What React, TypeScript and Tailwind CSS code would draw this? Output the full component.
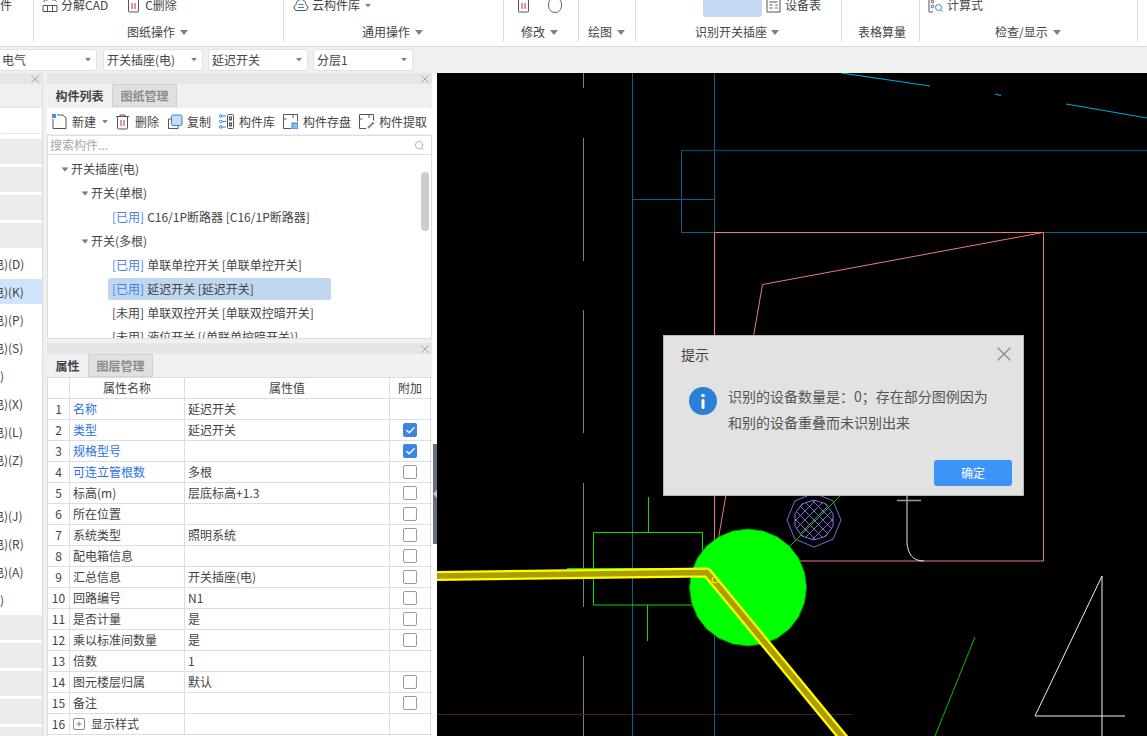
import { Check, Plus, Search, X } from 'lucide-react'

const rowsLeft = [
  '', '', '', '',
  '电)(D)', '电)(K)', '电)(P)', '电)(S)', ')', '电)(X)', '电)(L)', '电)(Z)', ' ', '电)(J)', '电)(R)', '电)(A)', ')',
  '', '', '', '', '',
]

const props = [
  { name: '名称', value: '延迟开关', blue: true, check: null },
  { name: '类型', value: '延迟开关', blue: true, check: true },
  { name: '规格型号', value: '', blue: true, check: true },
  { name: '可连立管根数', value: '多根', blue: true, check: false },
  { name: '标高(m)', value: '层底标高+1.3', check: false },
  { name: '所在位置', value: '', check: false },
  { name: '系统类型', value: '照明系统', check: false },
  { name: '配电箱信息', value: '', check: false },
  { name: '汇总信息', value: '开关插座(电)', check: false },
  { name: '回路编号', value: 'N1', check: false },
  { name: '是否计量', value: '是', check: false },
  { name: '乘以标准间数量', value: '是', check: false },
  { name: '倍数', value: '1', check: null },
  { name: '图元楼层归属', value: '默认', check: false },
  { name: '备注', value: '', check: false },
]

function Caret({ className = '' }: { className?: string }) {
  return (
    <svg width="8" height="5" viewBox="0 0 8 5" className={`shrink-0 ${className}`}>
      <polygon points="0,0 8,0 4,5" fill="#808080" />
    </svg>
  )
}

function TrashIcon() {
  return (
    <svg width="15" height="16" viewBox="0 0 15 16" fill="none" className="shrink-0">
      <path d="M1 2.500h13M5 2.500V1h5v1.500M2.500 2.500v11.500a1 1 0 0 0 1 1h8a1 1 0 0 0 1-1V2.500" stroke="#555" />
      <path d="M6 6v6M9 6v6" stroke="#d0262c" />
    </svg>
  )
}

function CadIcon() {
  return (
    <svg width="16" height="15" viewBox="0 0 16 15" fill="none" className="shrink-0">
      <path d="M1 7.500h14v6H1zM5.500 7.500v6M10.500 7.500v6" stroke="#555" />
      <path d="M1 4l2-2h3M15 4l-2-2h-3" stroke="#2f86e0" />
    </svg>
  )
}

function CloudIcon() {
  return (
    <svg width="16" height="14" viewBox="0 0 16 14" fill="none" className="shrink-0">
      <path d="M4 12.500h8a3 3 0 0 0 1-5.800C12.800 3.500 10.800 1.500 8 1.500S3.200 3.500 3 6.700a3 3 0 0 0 1 5.800z" stroke="#555" />
      <path d="M5.500 6.500h5M5 9.500h6" stroke="#2f86e0" />
    </svg>
  )
}

function SheetIcon() {
  return (
    <svg width="15" height="16" viewBox="0 0 15 16" fill="none" className="shrink-0">
      <path d="M1 1h13v14H1z" stroke="#555" />
      <path d="M3.500 5h8M3.500 8h3M3.500 11h3" stroke="#555" />
      <path d="M9 8h3M9 11h3" stroke="#2f86e0" />
    </svg>
  )
}

function FormulaIcon() {
  return (
    <svg width="16" height="16" viewBox="0 0 16 16" fill="none" className="shrink-0">
      <path d="M5 1H1v14h4" stroke="#555" />
      <path d="M7 1h4" stroke="#555" />
      <circle cx="4.500" cy="4.500" r="1.300" stroke="#555" />
      <circle cx="4.500" cy="9.500" r="1.300" stroke="#555" />
      <circle cx="10.500" cy="10.500" r="3" stroke="#2f86e0" />
      <path d="M12.500 12.500l2 2" stroke="#2f86e0" />
    </svg>
  )
}

function NewIcon() {
  return (
    <svg width="15" height="16" viewBox="0 0 15 16" fill="none" className="shrink-0">
      <path d="M1 5v9.500h13V4l-3-3H5" stroke="#555" />
      <rect x="0" y="0" width="4" height="4" fill="#3f8fe8" />
    </svg>
  )
}

function CopyIcon() {
  return (
    <svg width="16" height="16" viewBox="0 0 16 16" fill="none" className="shrink-0">
      <path d="M4 5H1.500v9.500H11V12" stroke="#555" />
      <rect x="4.500" y="1" width="10.500" height="10.500" rx="1.500" fill="#c7dcf5" stroke="#2f86e0" />
    </svg>
  )
}

function LibIcon() {
  return (
    <svg width="15" height="15" viewBox="0 0 15 15" fill="none" className="shrink-0">
      <circle cx="1.800" cy="2" r="1.300" stroke="#2f86e0" />
      <circle cx="1.800" cy="7.500" r="1.300" stroke="#2f86e0" />
      <circle cx="1.800" cy="13" r="1.300" stroke="#2f86e0" />
      <path d="M3 2h4M3 7.500h4M3 13h4" stroke="#2f86e0" />
      <rect x="8.500" y="0.500" width="6" height="14" rx="1" stroke="#555" />
      <rect x="10.500" y="3" width="2" height="3" stroke="#555" />
      <rect x="10.500" y="9" width="2" height="3" stroke="#555" />
    </svg>
  )
}

function SaveIcon() {
  return (
    <svg width="15" height="15" viewBox="0 0 15 15" fill="none" className="shrink-0">
      <path d="M8 14.500H.5V.5h14v7M.5 5h3M10 1v3" stroke="#555" />
      <rect x="9" y="9" width="6" height="6" fill="#8dbdf0" stroke="#2f86e0" />
    </svg>
  )
}

function PickIcon() {
  return (
    <svg width="15" height="15" viewBox="0 0 15 15" fill="none" className="shrink-0">
      <path d="M7 14.500H.5V.5h14v6M.5 5h3M10 1v3" stroke="#555" />
      <path d="M9 14l4-4" stroke="#8a8a8a" strokeWidth="2" />
      <path d="M13 8.500l1.500 1.500" stroke="#2f86e0" strokeWidth="2" />
    </svg>
  )
}

function PanelHead() {
  return (
    <div className="flex h-[11px] shrink-0 items-center justify-end bg-[#e6e6e6]">
      <X className="h-[14px] w-[14px] shrink-0 text-[#a0a0a0]" strokeWidth={1.500} />
    </div>
  )
}

function Tabs({ items }: { items: { label: string; w: string; active?: boolean }[] }) {
  return (
    <div className="flex h-[23px] shrink-0 bg-[#f0f0f0]">
      {items.map((t) =>
        t.active ? (
          <div key={t.label} className={`flex items-center justify-center font-bold text-[#444] ${t.w}`}>{t.label}</div>
        ) : (
          <div key={t.label} className={`flex items-center justify-center border border-[#d2d2d2] bg-[#e0e0e0] font-bold text-[#8c8c8c] ${t.w}`}>{t.label}</div>
        ),
      )}
    </div>
  )
}

function Ribbon() {
  return (
    <div className="flex h-[47px] shrink-0 overflow-hidden border-b border-[#dcdcdc] bg-white text-[12px] text-[#444]">
      <div className="h-[42px] w-[34px] shrink-0 border-r border-[#dedede]">
        <div className="-mt-[5px] flex h-5 items-center">件</div>
      </div>
      <div className="flex h-[42px] w-[250px] shrink-0 flex-col border-r border-[#dedede]">
        <div className="-mt-[5px] flex h-5 items-center pl-[8px]">
          <CadIcon />
          <span className="ml-[3px]">分解CAD</span>
          <span className="ml-[18px]"><TrashIcon /></span>
          <span className="ml-1">C删除</span>
        </div>
        <div className="mt-[7px] flex h-5 items-center pl-[93px]">图纸操作 <Caret className="ml-[5px]" /></div>
      </div>
      <div className="flex h-[42px] w-[220px] shrink-0 flex-col border-r border-[#dedede]">
        <div className="-mt-[5px] flex h-5 items-center pl-[9px]">
          <CloudIcon />
          <span className="ml-[3px]">云构件库</span>
          <Caret className="ml-[4px] scale-75" />
        </div>
        <div className="mt-[7px] flex h-5 items-center pl-[78px]">通用操作 <Caret className="ml-[5px]" /></div>
      </div>
      <div className="flex h-[42px] w-[75px] shrink-0 flex-col border-r border-[#dedede]">
        <div className="-mt-[5px] flex h-5 items-center pl-[12px]">
          <TrashIcon />
          <span className="ml-[17px] h-[16px] w-[14px] rounded-full border border-[#666]" />
        </div>
        <div className="mt-[7px] flex h-5 items-center pl-[17px]">修改 <Caret className="ml-[5px]" /></div>
      </div>
      <div className="flex h-[42px] w-[57px] shrink-0 flex-col border-r border-[#dedede]">
        <div className="-mt-[5px] h-5" />
        <div className="mt-[7px] flex h-5 items-center pl-[9px]">绘图 <Caret className="ml-[5px]" /></div>
      </div>
      <div className="flex h-[42px] w-[206px] shrink-0 flex-col border-r border-[#dedede]">
        <div className="-mt-[5px] flex h-5 pl-[67px]">
          <div className="h-[22px] w-[59px] shrink-0 rounded-[3px] bg-[#c2d9f1]" />
          <div className="ml-[4px] flex h-5 items-center">
            <SheetIcon />
            <span className="ml-1">设备表</span>
          </div>
        </div>
        <div className="mt-[7px] flex h-5 items-center pl-[59px]">识别开关插座 <Caret className="ml-[4px]" /></div>
      </div>
      <div className="flex h-[42px] w-[78px] shrink-0 flex-col border-r border-[#dedede]">
        <div className="-mt-[5px] h-5" />
        <div className="mt-[7px] flex h-5 items-center pl-[16px]">表格算量</div>
      </div>
      <div className="flex h-[42px] w-[218px] shrink-0 flex-col border-r border-[#dedede]">
        <div className="-mt-[5px] flex h-5 items-center pl-[8px]">
          <FormulaIcon />
          <span className="ml-[3px]">计算式</span>
        </div>
        <div className="mt-[7px] flex h-5 items-center pl-[75px]">检查/显示 <Caret className="ml-[5px]" /></div>
      </div>
    </div>
  )
}

function Select({ label, w, ml }: { label: string; w: string; ml: string }) {
  return (
    <div className={`flex h-[22px] items-center justify-between rounded-[3px] border border-[#e2e2e2] bg-white pr-[4px] pl-[3px] ${w} ${ml}`}>
      <span>{label}</span>
      <Caret className="scale-75" />
    </div>
  )
}

function LeftPanel() {
  return (
    <div className="flex h-full w-[43px] shrink-0 flex-col overflow-hidden border-r border-[#dddddd] bg-white text-[12px] text-[#444]">
      <PanelHead />
      <div className="h-[23px] shrink-0 bg-[#f0f0f0]" />
      <div className="h-[27px] shrink-0 rounded-[2px] border-y border-[#e4e4e4] bg-white" />
      <div className="h-[5px] shrink-0" />
      {rowsLeft.map((r, i) => (
        <div
          key={i}
          className={`mb-[3px] flex h-[25px] shrink-0 items-center whitespace-nowrap ${
            r === '' ? 'bg-[#ececec]' : i === 5 ? 'bg-[#cfe5fc]' : 'bg-white'
          }`}
        >
          <span className={r.length > 1 ? '-ml-[8px]' : ''}>{r}</span>
        </div>
      ))}
    </div>
  )
}

function TreeRow({ pad, caret, used, text }: { pad: string; caret?: boolean; used?: string; text: string }) {
  return (
    <div className={`flex h-6 items-center whitespace-nowrap ${pad}`}>
      {caret && <Caret className="mr-[2px] scale-90" />}
      {used === 'yes' && <span className="mr-[3px] text-[#4a7fe0]">[已用]</span>}
      {used === 'no' && <span className="mr-[3px]">[未用]</span>}
      {text}
    </div>
  )
}

function ListPanel() {
  const tools = [
    { icon: <LibIcon />, label: '构件库', ml: 'ml-2' },
    { icon: <SaveIcon />, label: '构件存盘', ml: 'ml-2' },
    { icon: <PickIcon />, label: '构件提取', ml: 'ml-2' },
  ]
  return (
    <div className="flex h-[266px] shrink-0 flex-col bg-[#f0f0f0]">
      <PanelHead />
      <Tabs items={[{ label: '构件列表', w: 'w-[65px]', active: true }, { label: '图纸管理', w: 'w-[65px]' }]} />
      <div className="mt-px flex h-[26px] shrink-0 items-center rounded-[3px] bg-white pt-px pl-[5px]">
        <NewIcon />
        <span className="ml-[5px]">新建</span>
        <Caret className="ml-[5px] scale-75" />
        <span className="ml-[6px]"><TrashIcon /></span>
        <span className="ml-[5px]">删除</span>
        <span className="ml-2"><CopyIcon /></span>
        <span className="ml-[4px]">复制</span>
        {tools.map((t) => (
          <div key={t.label} className={`flex items-center gap-[5px] whitespace-nowrap ${t.ml}`}>
            {t.icon}
            {t.label}
          </div>
        ))}
      </div>
      <div className="mt-px flex h-[20px] shrink-0 items-center justify-between border border-[#dedede] bg-white pr-[6px] pl-[2px] text-[#a8a8a8]">
        <span>搜索构件...</span>
        <Search className="h-[11px] w-[11px] text-[#b0b0b0]" />
      </div>
      <div className="flex min-h-0 flex-1 overflow-hidden border-x border-b border-[#dedede] bg-white pt-[2px]">
        <div className="min-w-0 flex-1">
          <TreeRow pad="pl-[13px]" caret text="开关插座(电)" />
          <TreeRow pad="pl-[33px]" caret text="开关(单根)" />
          <TreeRow pad="pl-[64px]" used="yes" text="C16/1P断路器 [C16/1P断路器]" />
          <TreeRow pad="pl-[33px]" caret text="开关(多根)" />
          <TreeRow pad="pl-[64px]" used="yes" text="单联单控开关 [单联单控开关]" />
          <div className="my-px ml-[60px] flex h-[22px] w-[223px] items-center rounded-[2px] bg-[#c0d7f0] pl-1 whitespace-nowrap">
            <span className="mr-[3px] text-[#4a7fe0]">[已用]</span>延迟开关 [延迟开关]
          </div>
          <TreeRow pad="pl-[64px]" used="no" text="单联双控开关 [单联双控暗开关]" />
          <TreeRow pad="pl-[64px]" used="no" text="液位开关 [(单联单控暗开关)]" />
        </div>
        <div className="mt-[15px] mr-[2px] h-[59px] w-2 shrink-0 rounded bg-[#cccccc]" />
      </div>
    </div>
  )
}

function PropRow({ no, children, value, check }: { no: number; children: React.ReactNode; value?: string; check: boolean | null }) {
  return (
    <div className="flex h-[21px] shrink-0 border-b border-[#dedede]">
      <div className="flex w-[22px] shrink-0 items-center justify-center border-r border-[#dedede]">{no}</div>
      <div className="flex w-[115px] shrink-0 items-center border-r border-[#dedede] pl-[3px] whitespace-nowrap">{children}</div>
      <div className="flex w-[205px] shrink-0 items-center border-r border-[#dedede] pl-[3px]">{value}</div>
      <div className="flex w-[41px] shrink-0 items-center justify-center border-r border-[#dedede]">
        {check === true && (
          <div className="flex h-[14px] w-[14px] items-center justify-center rounded-[2px] bg-[#3b86e0]">
            <Check className="h-[11px] w-[11px] text-white" strokeWidth={3} />
          </div>
        )}
        {check === false && <div className="h-[14px] w-[14px] rounded-[2px] border border-[#9a9a9a] bg-white" />}
      </div>
    </div>
  )
}

function PropsPanel() {
  return (
    <div className="mt-1 flex min-h-0 flex-1 flex-col overflow-hidden bg-[#f0f0f0]">
      <PanelHead />
      <Tabs items={[{ label: '属性', w: 'w-[41px]', active: true }, { label: '图层管理', w: 'w-[65px]' }]} />
      <div className="flex min-h-0 flex-1 flex-col overflow-hidden border-t border-l border-[#dedede] bg-white">
        <div className="flex h-[21px] shrink-0 border-b border-[#dedede]">
          <div className="w-[22px] shrink-0 border-r border-[#dedede]" />
          <div className="flex w-[115px] shrink-0 items-center justify-center border-r border-[#dedede]">属性名称</div>
          <div className="flex w-[205px] shrink-0 items-center justify-center border-r border-[#dedede]">属性值</div>
          <div className="flex w-[41px] shrink-0 items-center justify-center border-r border-[#dedede]">附加</div>
        </div>
        {props.map((p, i) => (
          <PropRow key={p.name} no={i + 1} value={p.value} check={p.check}>
            <span className={p.blue ? 'text-[#2a6fe8]' : ''}>{p.name}</span>
          </PropRow>
        ))}
        <PropRow no={16} check={null}>
          <span className="mr-[6px] flex h-3 w-3 items-center justify-center rounded-[2px] border border-[#888]">
            <Plus className="h-2 w-2 text-[#555]" />
          </span>
          显示样式
        </PropRow>
      </div>
    </div>
  )
}

function CadCanvas() {
  const poly = (cx: number, cy: number, r: number, n: number, rot = 0) =>
    Array.from({ length: n }, (_, i) => {
      const a = (i / n) * Math.PI * 2 + rot
      return `${(cx + r * Math.cos(a)).toFixed(1)},${(cy + r * Math.sin(a)).toFixed(1)}`
    }).join(' ')
  const hatch = Array.from({ length: 9 }, (_, i) => -36 + i * 9)
  return (
    <svg viewBox="437 73 710 663" className="block h-full w-full">
      <defs>
        <clipPath id="oct">
          <polygon points={poly(814, 520, 20, 10, Math.PI / 2)} />
        </clipPath>
      </defs>
      <rect x="437" y="73" width="710" height="663" fill="#000" />
      {/* 灰色点划线 */}
      <path d="M583.500 73v15M583.500 138v123M583.500 310v123M583.500 483v124M583.500 656v80" stroke="#808080" />
      <path d="M437 714.500h416" stroke="#4a1c28" />
      {/* 蓝色轴线 */}
      <path d="M632.500 73v663M714.500 73v663M632 199.500h82M681.500 150v83M681.500 232.500H1147" stroke="#0a5f88" />
      <path d="M681.500 150.500H1147" stroke="#064058" strokeWidth="1.500" />
      <path d="M841 73l89 13M995 94l6 1.500M1066 104l81 14" stroke="#00a5dc" strokeWidth="1.200" />
      {/* 红框 */}
      <path d="M714.500 561V232.500H1043.500V561H714.500M1043 232.500L762.500 284.500L714.500 561" stroke="#f07878" fill="none" />
      {/* 绿色 */}
      <path d="M593.500 532.500h109M593.500 532.500v72.500h109M648.500 497v35.500M647.500 605v36M567 568.500h92M702.500 532v20" stroke="#00e000" fill="none" />
      <polygon points={poly(748, 587.500, 58.500, 24)} fill="#00ff00" stroke="#009a00" />
      {/* 八边形 */}
      <polygon points={poly(814, 520, 27, 8, Math.PI / 2)} fill="none" stroke="#6f6fe0" />
      <polygon points={poly(814, 520, 20, 10, Math.PI / 2)} fill="none" stroke="#7a7aee" />
      <g clipPath="url(#oct)" stroke="#7a7aee" strokeWidth="0.900">
        {hatch.map((d) => (
          <g key={d}>
            <path d={`M${784 + d} 490l60 60`} />
            <path d={`M${844 + d} 490l-60 60`} />
          </g>
        ))}
      </g>
      <path d="M975 637L935 736M790 546l50-50" stroke="#00c000" />
      {/* 黄色管线 */}
      <polyline points="437,576 707,572.500 845,740" fill="none" stroke="#ffff00" strokeWidth="10" strokeLinejoin="round" />
      <polyline points="437,576 707,572.500 845,740" fill="none" stroke="#ad9c00" strokeWidth="5.500" strokeLinejoin="round" />
      <circle cx="715" cy="580" r="3" fill="none" stroke="#ffff00" />
      {/* 白色符号 */}
      <path d="M897 500.500h24M907 496v47" stroke="#9a9a9a" strokeWidth="1.500" />
      <path d="M907 543c1 10 5 18 17 18" stroke="#e8e8e8" fill="none" />
      <path d="M1102 576L1035 716H1125M1102 576V736" stroke="#f0f0f0" fill="none" />
    </svg>
  )
}

function Dialog() {
  return (
    <div className="absolute top-[262px] left-[226px] flex h-[161px] w-[361px] flex-col border border-[#b8b8b8] bg-[#e2e2e2] text-[14px] text-[#555]">
      <div className="flex items-center justify-between pt-[6px] pr-[7px] pl-[17px]">
        <span className="text-[#444]">提示</span>
        <X className="h-6 w-6 text-[#888]" strokeWidth={1.200} />
      </div>
      <div className="mt-[17px] flex pl-[25px]">
        <div className="mt-[4px] flex h-7 w-7 shrink-0 items-center justify-center rounded-full bg-[#2b7fd6]">
          <svg width="6" height="16" viewBox="0 0 6 16">
            <circle cx="3" cy="2.500" r="1.800" fill="#fff" />
            <rect x="1.500" y="6" width="3" height="10" rx="1.500" fill="#fff" />
          </svg>
        </div>
        <div className="ml-[11px] w-[270px] leading-[26px]">
          <div className="whitespace-nowrap">识别的设备数量是：0；存在部分图例因为</div>
          <div className="whitespace-nowrap">和别的设备重叠而未识别出来</div>
        </div>
      </div>
      <div className="mt-auto flex justify-end pr-[11px] pb-[9px]">
        <div className="flex h-[26px] w-[78px] items-center justify-center rounded-[3px] bg-[#3c93f8] text-[12px] text-white">确定</div>
      </div>
    </div>
  )
}

export default function App() {
  return (
    <div className="flex h-[736px] w-[1147px] flex-col overflow-hidden bg-[#f0f0f0] font-['Noto_Sans_CJK_SC','Liberation_Sans',sans-serif] text-[12px] text-[#444]">
      <Ribbon />
      <div className="flex h-[26px] shrink-0 items-center overflow-hidden bg-[#f0f0f0] pb-[1px]">
        <Select label="电气" w="w-[99px]" ml="-ml-[2px]" />
        <Select label="开关插座(电)" w="w-[100px]" ml="ml-[6px]" />
        <Select label="延迟开关" w="w-[100px]" ml="ml-[5px]" />
        <Select label="分层1" w="w-[100px]" ml="ml-[5px]" />
      </div>
      <div className="flex h-[663px] min-h-0">
        <LeftPanel />
        <div className="ml-[4px] flex h-full w-[385px] shrink-0 flex-col">
          <ListPanel />
          <PropsPanel />
        </div>
        <div className="flex w-[5px] shrink-0 bg-white">
          <div className="w-px bg-[#dedede]" />
          <div className="mt-[371px] ml-px flex h-[100px] w-[4px] items-center bg-[#667080]">
            <svg width="4" height="8" viewBox="0 0 4 8"><polygon points="4,0 0,4 4,8" fill="#c8c8c8" /></svg>
          </div>
        </div>
        <div className="relative min-w-0 flex-1">
          <CadCanvas />
          <Dialog />
        </div>
      </div>
    </div>
  )
}
